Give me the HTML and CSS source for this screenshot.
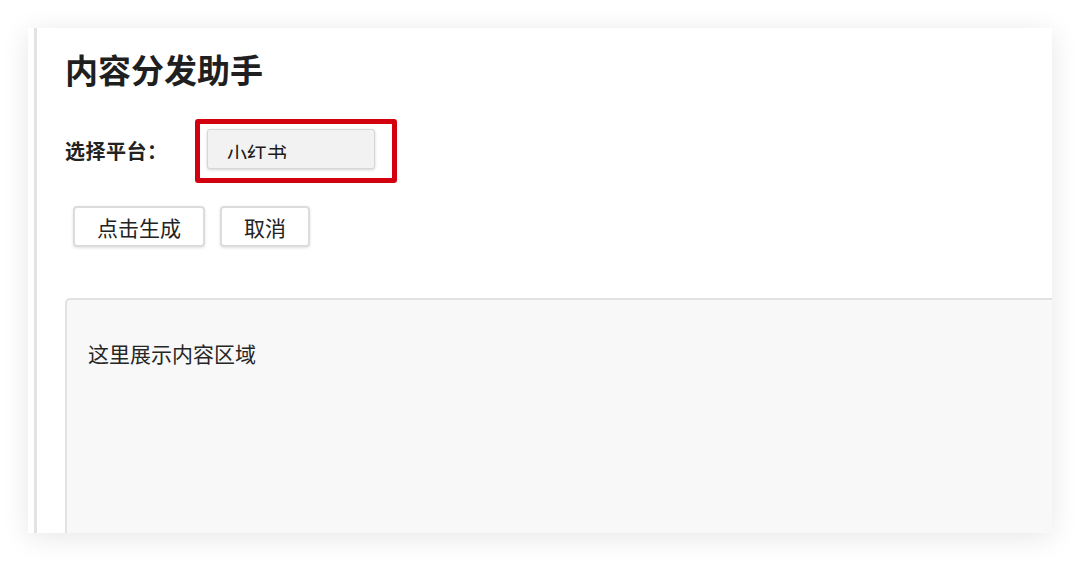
FILE: index.html
```html
<!DOCTYPE html>
<html lang="zh-CN">
<head>
<meta charset="utf-8">
<title>内容分发助手</title>
<link rel="stylesheet" href="styles.css">
</head>
<body>
<div class="frame">
  <div class="card">
    <div class="rail">
      <div class="main">
        <h1 class="title">内容分发助手</h1>
        <div class="row">
          <span class="label">选择平台：</span>
          <div class="highlight">
            <div class="select"><span class="select-text">小红书</span></div>
          </div>
        </div>
        <div class="actions">
          <button class="btn">点击生成</button>
          <button class="btn">取消</button>
        </div>
        <div class="output">
          <p class="output-text">这里展示内容区域</p>
        </div>
      </div>
    </div>
  </div>
</div>
</body>
</html>
```
FILE: styles.css
```css
* { box-sizing: border-box; }
html, body {
  margin: 0;
  padding: 0;
  background: #ffffff;
  font-family: "Noto Sans CJK SC", "Noto Sans", sans-serif;
  color: #222;
}
.frame {
  padding: 28px 28px 0 28px;
  height: 561px;
  overflow: hidden;
}
.card {
  width: 1024px;
  height: 505px;
  background: #fff;
  box-shadow: 0 4px 26px rgba(0, 0, 0, 0.10);
  padding-left: 6px;
  overflow: hidden;
}
.rail {
  height: 100%;
  border-left: 3px solid #e3e3e3;
  padding-left: 28px;
  overflow: hidden;
}
.main {
  padding-top: 21px;
  width: 1100px;
}
.title {
  margin: 0;
  font-size: 33px;
  line-height: 40px;
  font-weight: 700;
  color: #1f1f1f;
}
.row {
  margin-top: 30px;
  display: flex;
  align-items: center;
}
.label {
  width: 130px;
  font-size: 20px;
  font-weight: 700;
  line-height: 24px;
  letter-spacing: 0.5px;
  color: #222;
}
.highlight {
  width: 202px;
  height: 64px;
  border: 5px solid #d3000f;
  border-radius: 3px;
  padding: 5px 0 0 7px;
}
.select {
  width: 168px;
  height: 40px;
  background: #f2f2f2;
  border: 1px solid #d6d6d6;
  border-radius: 3px;
  box-shadow: 0 1px 3px rgba(0, 0, 0, 0.18);
  padding: 14px 0 0 19px;
}
.select-text {
  display: block;
  height: 15px;
  overflow: hidden;
  font-size: 20px;
  line-height: 20px;
  color: #1a1a1a;
}
.actions {
  margin-top: 23px;
  margin-left: 8px;
  display: flex;
  gap: 15px;
}
.btn {
  height: 41px;
  padding: 0 22px;
  background: #fff;
  border: 2px solid #dcdcdc;
  border-radius: 4px;
  box-shadow: 0 1px 3px rgba(0, 0, 0, 0.12);
  font-family: "Noto Sans CJK SC", "Noto Sans", sans-serif;
  font-size: 21px;
  line-height: 24px;
  color: #222;
}
.output {
  margin-top: 51px;
  height: 300px;
  background: #f8f8f8;
  border: 2px solid #e2e2e2;
  border-radius: 5px;
  padding: 40px 0 0 21px;
}
.output-text {
  margin: 0;
  font-size: 21px;
  line-height: 26px;
  color: #262626;
}
```
